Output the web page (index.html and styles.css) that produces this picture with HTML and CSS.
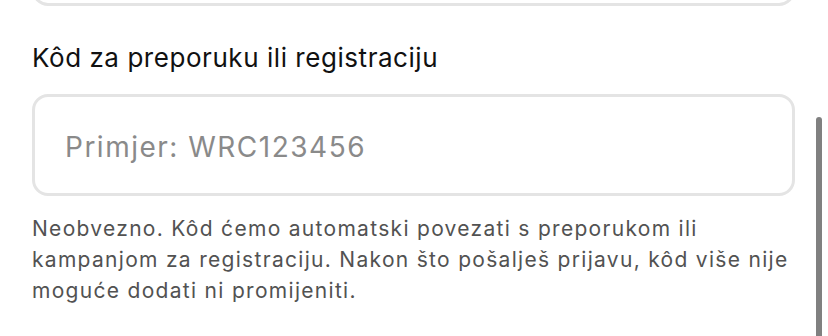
FILE: index.html
```html
<!DOCTYPE html>
<html lang="hr">
<head>
<meta charset="utf-8">
<link rel="stylesheet" href="styles.css">
</head>
<body>
<div class="page">
  <div class="form">
    <div class="prev-field"></div>
    <label class="label" for="code">Kôd za preporuku ili registraciju</label>
    <div class="input-box">
      <input id="code" class="input" type="text" placeholder="Primjer: WRC123456">
    </div>
    <p class="help">Neobvezno. Kôd ćemo automatski povezati s preporukom ili kampanjom za registraciju. Nakon što pošalješ prijavu, kôd više nije moguće dodati ni promijeniti.</p>
  </div>
  <div class="scrollbar"></div>
</div>
</body>
</html>
```
FILE: styles.css
```css
html, body {
  margin: 0;
  padding: 0;
  background: #ffffff;
}
.page {
  position: relative;
  width: 828px;
  height: 336px;
  overflow: hidden;
  font-family: Inter, "Noto Sans", sans-serif;
}
.form {
  padding-left: 32px;
  width: 763px;
}
.prev-field {
  height: 100px;
  margin-top: -94px;
  border: 3px solid #e4e4e4;
  border-radius: 16px;
  box-sizing: border-box;
}
.label {
  display: block;
  margin-top: 36px;
  font-size: 26px;
  line-height: 32px;
  letter-spacing: 0.55px;
  color: #111111;
}
.input-box {
  margin-top: 20px;
  height: 102px;
  border: 3px solid #e4e4e4;
  border-radius: 16px;
  box-sizing: border-box;
  display: flex;
  align-items: center;
  padding: 4px 0 0 30px;
}
.input {
  border: none;
  outline: none;
  background: transparent;
  font-family: inherit;
  font-size: 28px;
  letter-spacing: 1.5px;
  color: #111;
  width: 100%;
  padding: 0;
}
.input::placeholder {
  color: #8a8a8a;
}
.help {
  margin: 17px 0 0 0;
  font-size: 21px;
  line-height: 31px;
  letter-spacing: 1.3px;
  color: #525252;
}
.scrollbar {
  position: absolute;
  left: 816px;
  top: 117px;
  width: 6px;
  height: 240px;
  border-radius: 3px;
  background: #808080;
}
```
